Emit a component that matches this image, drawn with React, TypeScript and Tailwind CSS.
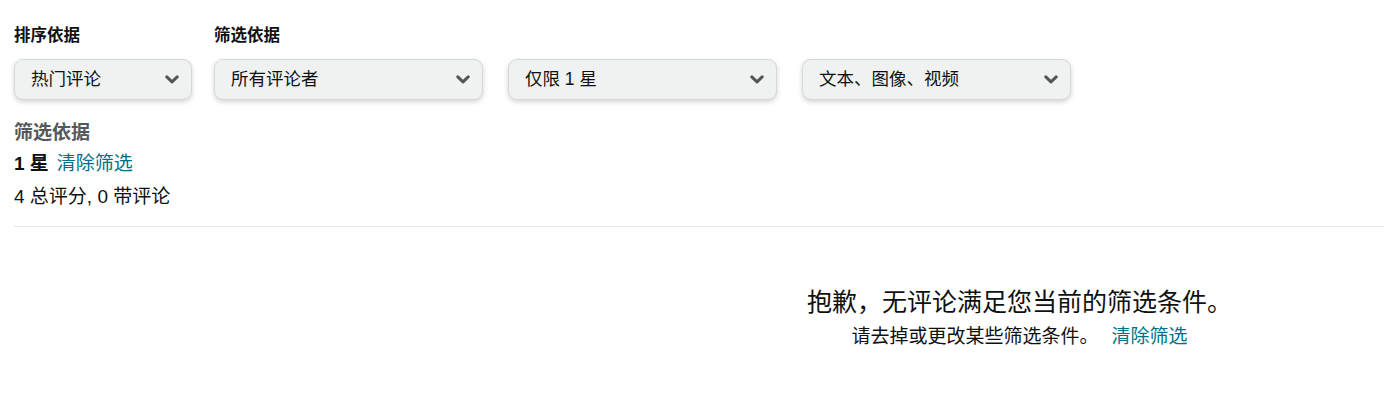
const font = { fontFamily: '"Liberation Sans", "Noto Sans CJK SC", sans-serif' };

function Chevron() {
  return (
    <svg width="14" height="9" viewBox="0 0 14 9" className="shrink-0">
      <path d="M1.8 1.8 L7 6.8 L12.2 1.8" fill="none" stroke="#555" strokeWidth="3" strokeLinecap="round" strokeLinejoin="round" />
    </svg>
  );
}

function Select({ label, width }: { label: string; width: string }) {
  return (
    <div
      className={`${width} h-[41px] flex items-center justify-between pl-[16px] pr-[12px] rounded-[9px] bg-[#f0f2f2] border border-[#d5d9d9] shadow-[0_2px_5px_rgba(15,17,17,0.18)] text-[17.5px] text-[#0f1111]`}
    >
      <span>{label}</span>
      <Chevron />
    </div>
  );
}

export default function App() {
  return (
    <div className="w-[1384px] h-[409px] bg-white text-[#0f1111]" style={font}>
      <div className="pl-[14px] pt-[25px]">
        <div className="flex items-end">
          <div className="flex flex-col w-[200px]">
            <span className="text-[16.5px] font-bold leading-[20px]">排序依据</span>
            <div className="mt-[14px]">
              <Select label="热门评论" width="w-[178px]" />
            </div>
          </div>
          <div className="flex flex-col">
            <span className="text-[16.5px] font-bold leading-[20px]">筛选依据</span>
            <div className="mt-[14px] flex gap-[25px]">
              <Select label="所有评论者" width="w-[269px]" />
              <Select label="仅限 1 星" width="w-[269px]" />
              <Select label="文本、图像、视频" width="w-[269px]" />
            </div>
          </div>
        </div>

        <div className="mt-[21px] text-[19px] font-bold text-[#565959] leading-[24px]">筛选依据</div>
        <div className="mt-[7px] text-[19px] leading-[24px]">
          <span className="font-bold">1 星</span>
          <a className="ml-[8px] text-[#007185] cursor-pointer">清除筛选</a>
        </div>
        <div className="mt-[9px] text-[19px] leading-[24px]">4 总评分, 0 带评论</div>
        <div className="mt-[17px] border-t border-[#e7e7e7]" />
      </div>

      <div className="ml-[655px] mt-[59px] flex flex-col items-center">
        <div className="text-[25px] leading-[32px] text-[#0f1111]">抱歉，无评论满足您当前的筛选条件。</div>
        <div className="mt-[7px] text-[19px] leading-[24px]">
          请去掉或更改某些筛选条件。
          <a className="ml-[13px] text-[#007185] cursor-pointer">清除筛选</a>
        </div>
      </div>
    </div>
  );
}
